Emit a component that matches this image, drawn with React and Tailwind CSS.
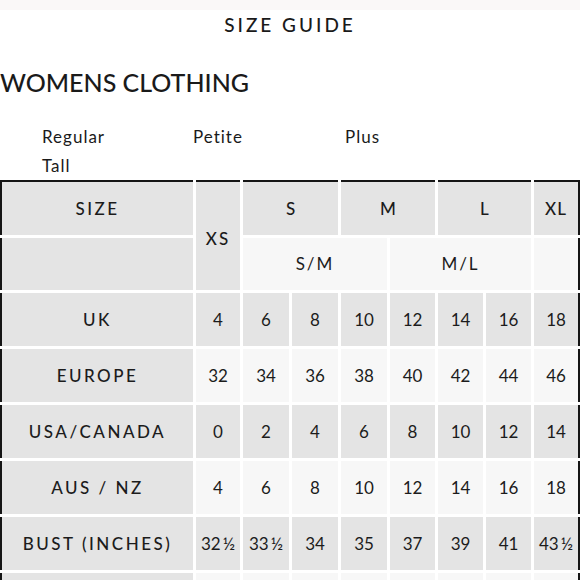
import React from "react";

const GREY = "bg-[#e4e4e4]";
const LIGHT = "bg-[#f7f7f7]";

const rows = [
  { label: "UK", values: ["4", "6", "8", "10", "12", "14", "16", "18"], grey: true },
  { label: "EUROPE", values: ["32", "34", "36", "38", "40", "42", "44", "46"], grey: false },
  { label: "USA/CANADA", values: ["0", "2", "4", "6", "8", "10", "12", "14"], grey: true },
  { label: "AUS / NZ", values: ["4", "6", "8", "10", "12", "14", "16", "18"], grey: false },
  { label: "BUST (INCHES)", values: ["32\u2009½", "33\u2009½", "34", "35", "37", "39", "41", "43\u2009½"], grey: true },
  // next row is only a sliver at the bottom edge
  { label: "", values: ["", "", "", "", "", "", "", ""], grey: false },
];

const Cell = ({ className = "", children }) => (
  <div className={`flex items-center justify-center ${className}`}>{children}</div>
);

const SizeTable = () => {
  return (
    <div className="grid grid-cols-[193px_44px_46px_46px_46px_45px_45px_45px_46px] grid-rows-[55px_52px_53px_53px_53px_53px_53px_53px] gap-[3px] text-[17px] text-[#1c1c1c]">
      <Cell className={`${GREY} border-l-2 border-t-2 border-[#151515] font-medium tracking-[2.5px]`}>SIZE</Cell>
      <Cell className={`${GREY} row-span-2 border-t-2 border-[#151515] font-medium tracking-[2px] pt-[6px]`}>XS</Cell>
      <Cell className={`${GREY} col-span-2 border-t-2 border-[#151515] font-medium`}>S</Cell>
      <Cell className={`${GREY} col-span-2 border-t-2 border-[#151515] font-medium`}>M</Cell>
      <Cell className={`${GREY} col-span-2 border-t-2 border-[#151515] font-medium`}>L</Cell>
      <Cell className={`${GREY} border-t-2 border-r-2 border-[#151515] font-medium tracking-[1px]`}>XL</Cell>

      <Cell className={`${GREY} border-l-2 border-[#151515]`} />
      <Cell className={`${LIGHT} col-span-3 tracking-[2px]`}>S/M</Cell>
      <Cell className={`${LIGHT} col-span-3 tracking-[2px]`}>M/L</Cell>
      <Cell className={`${LIGHT} border-r-2 border-[#151515]`} />

      {rows.map((row, r) => (
        <React.Fragment key={r}>
          <Cell className={`${GREY} border-l-2 border-[#151515] font-medium tracking-[2.5px]`}>
            {row.label}
          </Cell>
          {row.values.map((v, i) => (
            <Cell
              key={i}
              className={`${row.grey ? GREY : LIGHT} ${i === 7 ? "border-r-2 border-[#151515]" : ""}`}
            >
              {v}
            </Cell>
          ))}
        </React.Fragment>
      ))}
    </div>
  );
};

export default function App() {
  return (
    <div className="h-[580px] w-[580px] overflow-hidden bg-white font-['Lato','Liberation_Sans',sans-serif] text-[#1a1a1a]">
      <div className="h-[10px] bg-[#faf8f8]" />
      <h1 className="mt-[6px] text-center text-[19px] leading-[18px] font-medium tracking-[3px]">
        SIZE GUIDE
      </h1>
      <h2 className="mt-[36px] text-[25px] leading-[24px] font-medium">
        WOMENS CLOTHING
      </h2>
      <div className="mt-[28px] pl-[42px] text-[17px] tracking-[1px] leading-[29px]">
        <div className="flex">
          <span className="w-[151px]">Regular</span>
          <span className="w-[152px]">Petite</span>
          <span>Plus</span>
        </div>
        <div>Tall</div>
      </div>
      <SizeTable />
    </div>
  );
}
